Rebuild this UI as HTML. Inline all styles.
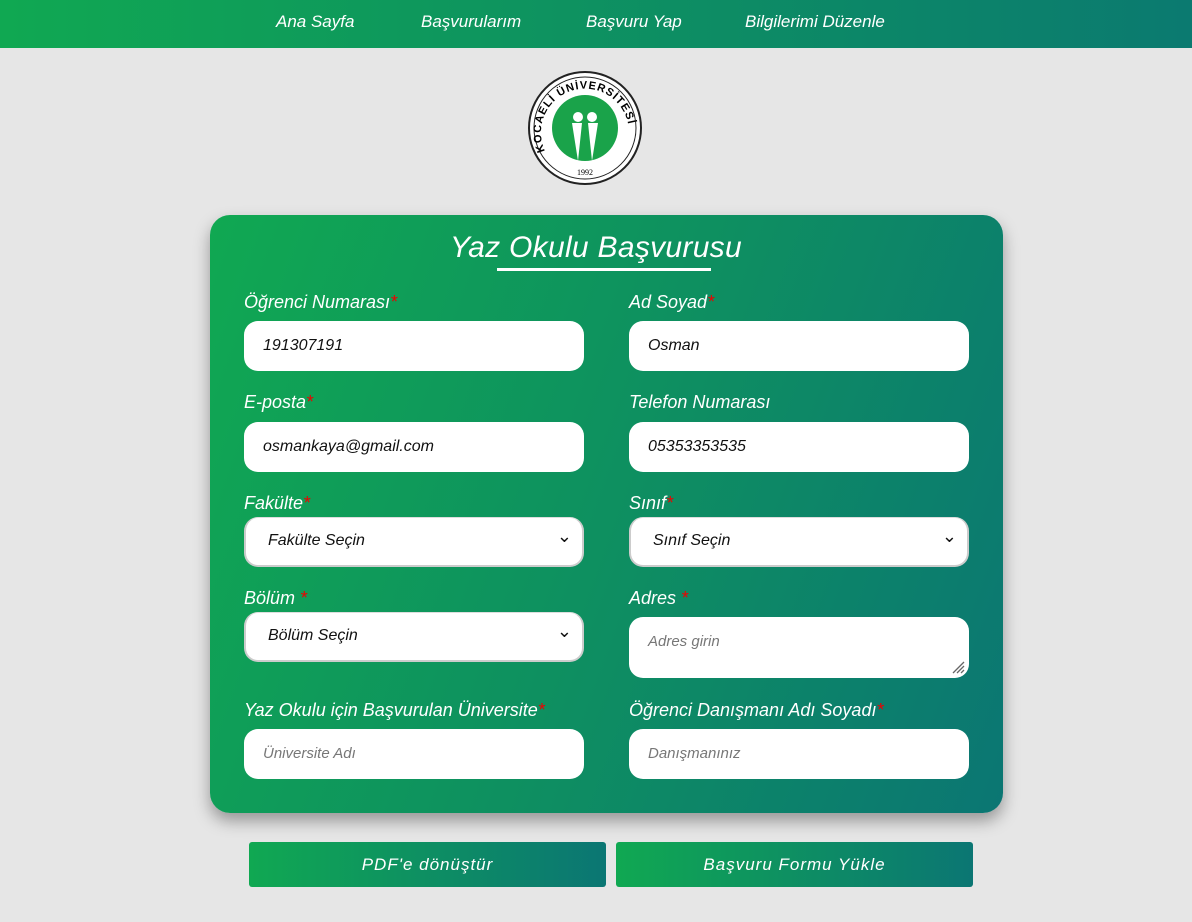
<!DOCTYPE html>
<html><head><meta charset="utf-8"><style>
*{box-sizing:border-box;margin:0;padding:0}
body{width:1192px;height:922px;background:#e6e6e6;font-family:"Liberation Sans",sans-serif;font-style:italic;position:relative;overflow:hidden}
.nav{position:absolute;left:0;top:0;width:1192px;height:48px;background:linear-gradient(90deg,#10a852,#0b7a70)}
.nav span{position:absolute;top:12px;color:#fff;font-size:17px}
.card{position:absolute;left:210px;top:215px;width:793px;height:598px;border-radius:20px;background:linear-gradient(110deg,#10a852 0%,#0e9060 50%,#0b7673 100%);box-shadow:0 8px 16px rgba(0,0,0,.35)}
h1{position:absolute;left:0;width:100%;top:231px;text-align:center;color:#fff;font-weight:normal;font-size:30px;letter-spacing:.3px}
.ul{position:absolute;left:497px;top:268px;width:214px;height:3px;background:#fff}
.l{position:absolute;color:#fff;font-size:18px}
.l b{color:#e00;font-weight:normal}
.f{position:absolute;width:340px;height:50px;background:#fff;border-radius:14px;font-size:16px;color:#111;padding:16px 19px}
.s{border:2px solid #ccc;border-top:1px solid #ddd;padding:14px 22px}
.s:after{content:"⌄";position:absolute;right:10px;top:8px;font-style:normal;font-size:18px}
.p{color:#777;font-size:15px}
.btn{position:absolute;top:842px;width:357px;height:45px;background:linear-gradient(90deg,#10a852,#0b7673);color:#fff;font-size:17px;text-align:center;line-height:45px;letter-spacing:1px;border-radius:3px}
</style></head><body>
<div class="nav"><span style="left:276px">Ana Sayfa</span><span style="left:421px">Başvurularım</span><span style="left:586px">Başvuru Yap</span><span style="left:745px">Bilgilerimi Düzenle</span></div>
<svg style="position:absolute;left:528px;top:71px" width="114" height="114" viewBox="0 0 114 114">
<circle cx="57" cy="57" r="56" fill="#fff" stroke="#222" stroke-width="2"/><circle cx="57" cy="57" r="51" fill="none" stroke="#222" stroke-width="1"/>
<circle cx="57" cy="57" r="33" fill="#1aa34a"/>
<path d="M44 52 L50 90 L54 52Z M60 52 L64 90 L70 52Z" fill="#fff"/>
<circle cx="50" cy="46" r="5" fill="#fff"/><circle cx="64" cy="46" r="5" fill="#fff"/>
<text x="57" y="104" font-size="8" text-anchor="middle" font-family="Liberation Serif" font-style="normal">1992</text>
<path id="a" d="M17 80 A44 44 0 1 1 97 80" fill="none"/>
<text font-size="11" font-weight="bold" font-style="normal" letter-spacing="1"><textPath href="#a">KOCAELİ ÜNİVERSİTESİ</textPath></text>
</svg>
<div class="card"></div>
<h1>Yaz Okulu Başvurusu</h1><div class="ul"></div>
<div class="l" style="left:244px;top:292px">Öğrenci Numarası<b>*</b></div>
<div class="l" style="left:629px;top:292px">Ad Soyad<b>*</b></div>
<div class="f" style="left:244px;top:321px">191307191</div>
<div class="f" style="left:629px;top:321px">Osman</div>
<div class="l" style="left:244px;top:392px">E-posta<b>*</b></div>
<div class="l" style="left:629px;top:392px">Telefon Numarası</div>
<div class="f" style="left:244px;top:422px">osmankaya@gmail.com</div>
<div class="f" style="left:629px;top:422px">05353353535</div>
<div class="l" style="left:244px;top:493px">Fakülte<b>*</b></div>
<div class="l" style="left:629px;top:493px">Sınıf<b>*</b></div>
<div class="f s" style="left:244px;top:517px">Fakülte Seçin</div>
<div class="f s" style="left:629px;top:517px">Sınıf Seçin</div>
<div class="l" style="left:244px;top:588px">Bölüm <b>*</b></div>
<div class="l" style="left:629px;top:588px">Adres <b>*</b></div>
<div class="f s" style="left:244px;top:612px">Bölüm Seçin</div>
<div class="f p" style="left:629px;top:617px;height:61px">Adres girin
<svg style="position:absolute;right:4px;bottom:4px" width="14" height="14"><path d="M2 13L13 2M6 13L13 6M10 13L13 10" stroke="#666" stroke-width="1.3"/></svg></div>
<div class="l" style="left:244px;top:700px">Yaz Okulu için Başvurulan Üniversite<b>*</b></div>
<div class="l" style="left:629px;top:700px">Öğrenci Danışmanı Adı Soyadı<b>*</b></div>
<div class="f p" style="left:244px;top:729px">Üniversite Adı</div>
<div class="f p" style="left:629px;top:729px">Danışmanınız</div>
<div class="btn" style="left:249px">PDF'e dönüştür</div>
<div class="btn" style="left:616px">Başvuru Formu Yükle</div>
</body></html>
